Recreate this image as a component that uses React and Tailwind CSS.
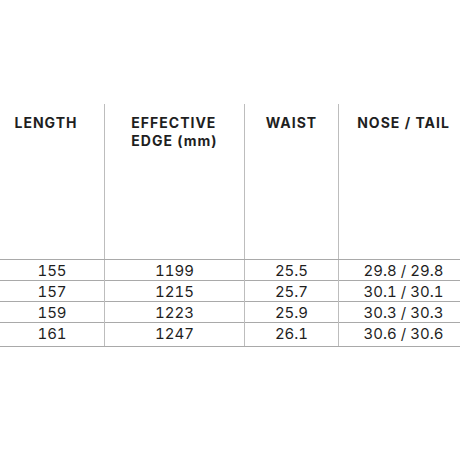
const rows = [
  ["155", "1199", "25.5", "29.8 / 29.8"],
  ["157", "1215", "25.7", "30.1 / 30.1"],
  ["159", "1223", "25.9", "30.3 / 30.3"],
  ["161", "1247", "26.1", "30.6 / 30.6"],
];

const cols = "grid grid-cols-[104px_140px_94px_122px]";

export default function App() {
  return (
    <div className="w-[460px] h-[460px] bg-white text-[#1f1f1f] font-['Inter',sans-serif] pt-[104px]">
      {/* header */}
      <div className={`${cols} h-[155px] text-[14px] font-bold leading-[18px] tracking-[1px]`}>
        <div className="pt-[10px] pr-[12px] text-center">LENGTH</div>
        <div className="pt-[10px] border-l border-[#bdbdbd] flex justify-center">
          <div className="text-left">
            EFFECTIVE
            <br />
            EDGE (mm)
          </div>
        </div>
        <div className="pt-[10px] border-l border-[#bdbdbd] text-center">WAIST</div>
        <div className="pt-[10px] pl-[8px] border-l border-[#bdbdbd] text-center">NOSE / TAIL</div>
      </div>

      {/* data */}
      {rows.map((r, i) => (
        <div
          key={r[0]}
          className={`${cols} border-t border-[#a9a9a9] text-[15px] tabular-nums ${
            i === rows.length - 1 ? "h-[25px] pb-[3px] border-b" : "h-[21px]"
          }`}
        >
          {r.map((v, j) => (
            <div
              key={j}
              className={`flex items-center justify-center ${j > 0 ? "border-l border-[#bdbdbd]" : ""} ${
                j === 3 ? "pl-[8px]" : ""
              }`}
            >
              {v}
            </div>
          ))}
        </div>
      ))}
    </div>
  );
}
